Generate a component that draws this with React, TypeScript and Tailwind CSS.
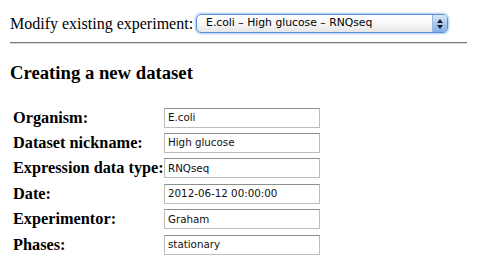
import React from "react";

const rows: [string, string][] = [
  ["Organism:", "E.coli"],
  ["Dataset nickname:", "High glucose"],
  ["Expression data type:", "RNQseq"],
  ["Date:", "2012-06-12 00:00:00"],
  ["Experimentor:", "Graham"],
  ["Phases:", "stationary"],
];

export default function App() {
  return (
    <div className="w-[478px] h-[262px] overflow-hidden bg-white text-black" style={{ fontFamily: '"Liberation Serif", serif' }}>
      <div className="pl-[10px] pr-[11px] pt-[14px]">
        <div className="flex items-center h-[19px]">
          <span className="text-[16px] leading-none">Modify existing experiment:</span>
          <div className="ml-[3px] w-[252px] h-[19px] rounded-[5px] border border-[#5b8fd6] shadow-[0_0_2px_1px_#a9c8f0] flex overflow-hidden bg-gradient-to-b from-white via-[#f7f7f7] to-[#e6e6e6]">
            <div className="flex-1 flex items-center pl-[9px] text-[10.8px] text-black" style={{ fontFamily: '"DejaVu Sans", sans-serif' }}>
              E.coli – High glucose – RNQseq
            </div>
            <div className="w-[15px] border-l border-[#9fb7d8] bg-gradient-to-b from-[#dbe9fb] via-[#a9c9f2] to-[#7fb0ec] flex flex-col items-center justify-center gap-[2px]">
              <svg width="6" height="4" viewBox="0 0 6 4"><path d="M0 4 L3 0 L6 4Z" fill="#1a1a1a" /></svg>
              <svg width="6" height="4" viewBox="0 0 6 4"><path d="M0 0 L3 4 L6 0Z" fill="#1a1a1a" /></svg>
            </div>
          </div>
        </div>
        <div className="mt-[9px] border-t-[1px] border-b-[1px] border-t-[#7a7a7a] border-b-[#d6d6d6]" />
        <h2 className="mt-[20px] text-[18.7px] font-bold leading-none">Creating a new dataset</h2>
        <div className="mt-[25px] pl-[3px] flex flex-col gap-[5.4px]">
          {rows.map(([label, value]) => (
            <div key={label} className="flex items-center h-[20px]">
              <span className="w-[151px] text-[16.3px] font-bold leading-none whitespace-nowrap">{label}</span>
              <div className="w-[156px] h-[20px] border border-[#bdbdbd] border-t-[#8e8e8e] flex items-center pl-[3px] text-[10.3px] text-[#111]" style={{ fontFamily: '"DejaVu Sans", sans-serif' }}>
                {value}
              </div>
            </div>
          ))}
        </div>
      </div>
    </div>
  );
}
